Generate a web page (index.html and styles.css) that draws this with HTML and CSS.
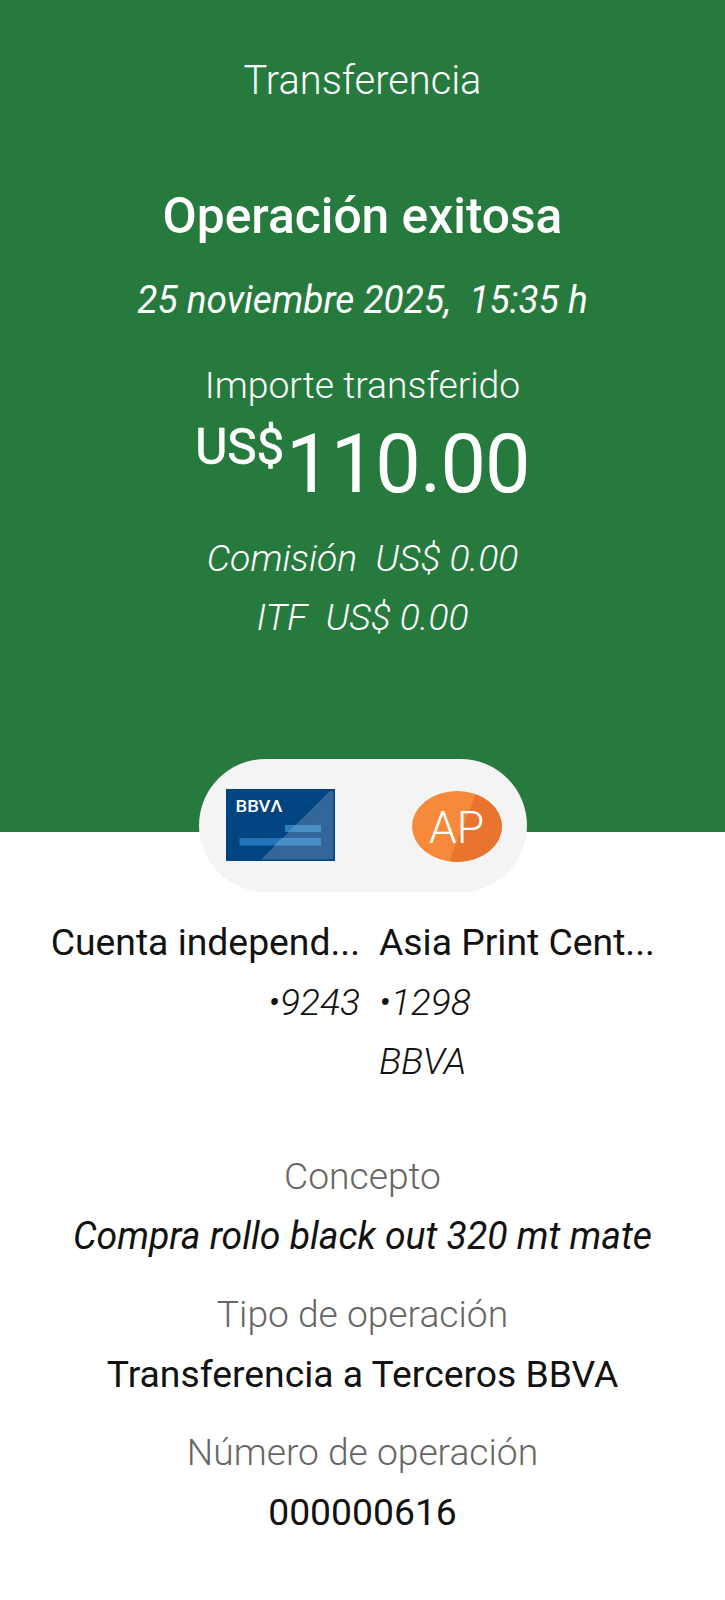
FILE: index.html
```html
<!DOCTYPE html>
<html lang="es">
<head>
<meta charset="utf-8">
<title>Transferencia</title>
<link rel="stylesheet" href="styles.css">
</head>
<body>
<header class="hero">
  <div class="line title"><span>Transferencia</span></div>
  <h1 class="line status"><span>Operación exitosa</span></h1>
  <div class="line date"><span>25 noviembre 2025,&nbsp; 15:35 h</span></div>
  <div class="line label"><span>Importe transferido</span></div>
  <div class="line amount"><span class="currency">US$</span><span>110.00</span></div>
  <div class="line fee"><span>Comisión&nbsp; US$ 0.00</span></div>
  <div class="line fee"><span>ITF&nbsp; US$ 0.00</span></div>
</header>
<div class="pill">
  <svg class="card" viewBox="0 0 109 72" role="img" aria-label="BBVA">
    <rect width="109" height="72" fill="#004481"/>
    <rect x="59" y="36" width="36" height="7" fill="#2a7fc0"/>
    <rect x="13.500" y="49" width="81.500" height="7.500" fill="#1f73b8"/>
    <path d="M107.500 2V70.500H35L104 2z" fill="#336699"/>
    <path d="M69 36H95V43H62z" fill="#4a90c8"/>
    <path d="M56 49H95V56.500H48z" fill="#4a90c8"/>
    <text class="brand" x="9.500" y="22.500" textLength="47" lengthAdjust="spacingAndGlyphs">BBVΛ</text>
  </svg>
  <svg class="avatar" viewBox="0 0 90 71">
    <clipPath id="disc"><ellipse cx="45" cy="35.500" rx="45" ry="35.500"/></clipPath>
    <g clip-path="url(#disc)">
      <rect width="90" height="71" fill="#f7893b"/>
      <path d="M65 0H90V71H37z" fill="#e8742d"/>
    </g>
    <text class="initials" x="44.500" y="51.500" text-anchor="middle">AP</text>
  </svg>
</div>
<main class="details">
  <section class="accounts">
    <div class="from"><p class="name">Cuenta independ...</p><p class="sub">•9243</p></div>
    <div class="to"><p class="name">Asia Print Cent...</p><p class="sub">•1298</p><p class="sub">BBVA</p></div>
  </section>
  <p class="line caption first">Concepto</p>
  <p class="line value italic">Compra rollo black out 320 mt mate</p>
  <p class="line caption">Tipo de operación</p>
  <p class="line value">Transferencia a Terceros BBVA</p>
  <p class="line caption">Número de operación</p>
  <p class="line value">000000616</p>
</main>
</body>
</html>
```
FILE: styles.css
```css
* { box-sizing: border-box; margin: 0; }
body { font-family: Roboto, sans-serif; background: #fff; color: #121212; font-weight: 400; }
.hero { height: 832px; padding-top: 51px; background: #277a3e; color: #fff; }
.line { text-align: center; white-space: pre; line-height: 60px; }
.title { font-size: 39.8px; font-weight: 300; }
.status { margin-top: 75px; font-size: 49.7px; font-weight: 500; }
.date { margin-top: 24px; font-size: 39px; font-style: italic; transform: scaleX(0.949); }
.label { margin-top: 25px; font-size: 37.3px; font-weight: 300; }
.amount { display: flex; justify-content: center; height: 105px; margin-top: 9px; font-size: 81px; line-height: 82px; letter-spacing: -0.9px; }
.currency { font-size: 49.5px; line-height: 46px; margin-right: 2px; letter-spacing: -0.2px; -webkit-text-stroke: 0.6px #fff; }
.fee { margin-top: -1px; font-size: 37.3px; font-weight: 300; font-style: italic; }
.pill { position: relative; display: flex; align-items: center; justify-content: space-between; width: 328px; height: 133px; margin: -73px auto 0; padding: 0 25px 0 27px; border-radius: 67px; background: #f4f4f4; }
.card { width: 109px; height: 72px; margin-top: -1px; }
.brand { font: 500 17px Roboto, sans-serif; fill: #fff; }
.avatar { width: 90px; height: 71px; margin-top: 1px; }
.initials { font: 300 44.5px Roboto, sans-serif; fill: #fff; }
.accounts { display: grid; grid-template-columns: 360px 1fr; column-gap: 19px; padding-top: 21px; height: 254px; line-height: 59.5px; }
.from { display: flex; flex-direction: column; align-items: flex-end; white-space: nowrap; }
.name { font-size: 37.3px; }
.sub { font-size: 37.2px; font-weight: 300; font-style: italic; }
.caption { margin-top: 18px; font-size: 37.2px; font-weight: 300; color: #666; }
.first { margin-top: 0; }
.value { font-size: 37.3px; }
.italic { font-size: 39px; font-style: italic; transform: scaleX(0.957); }
```
